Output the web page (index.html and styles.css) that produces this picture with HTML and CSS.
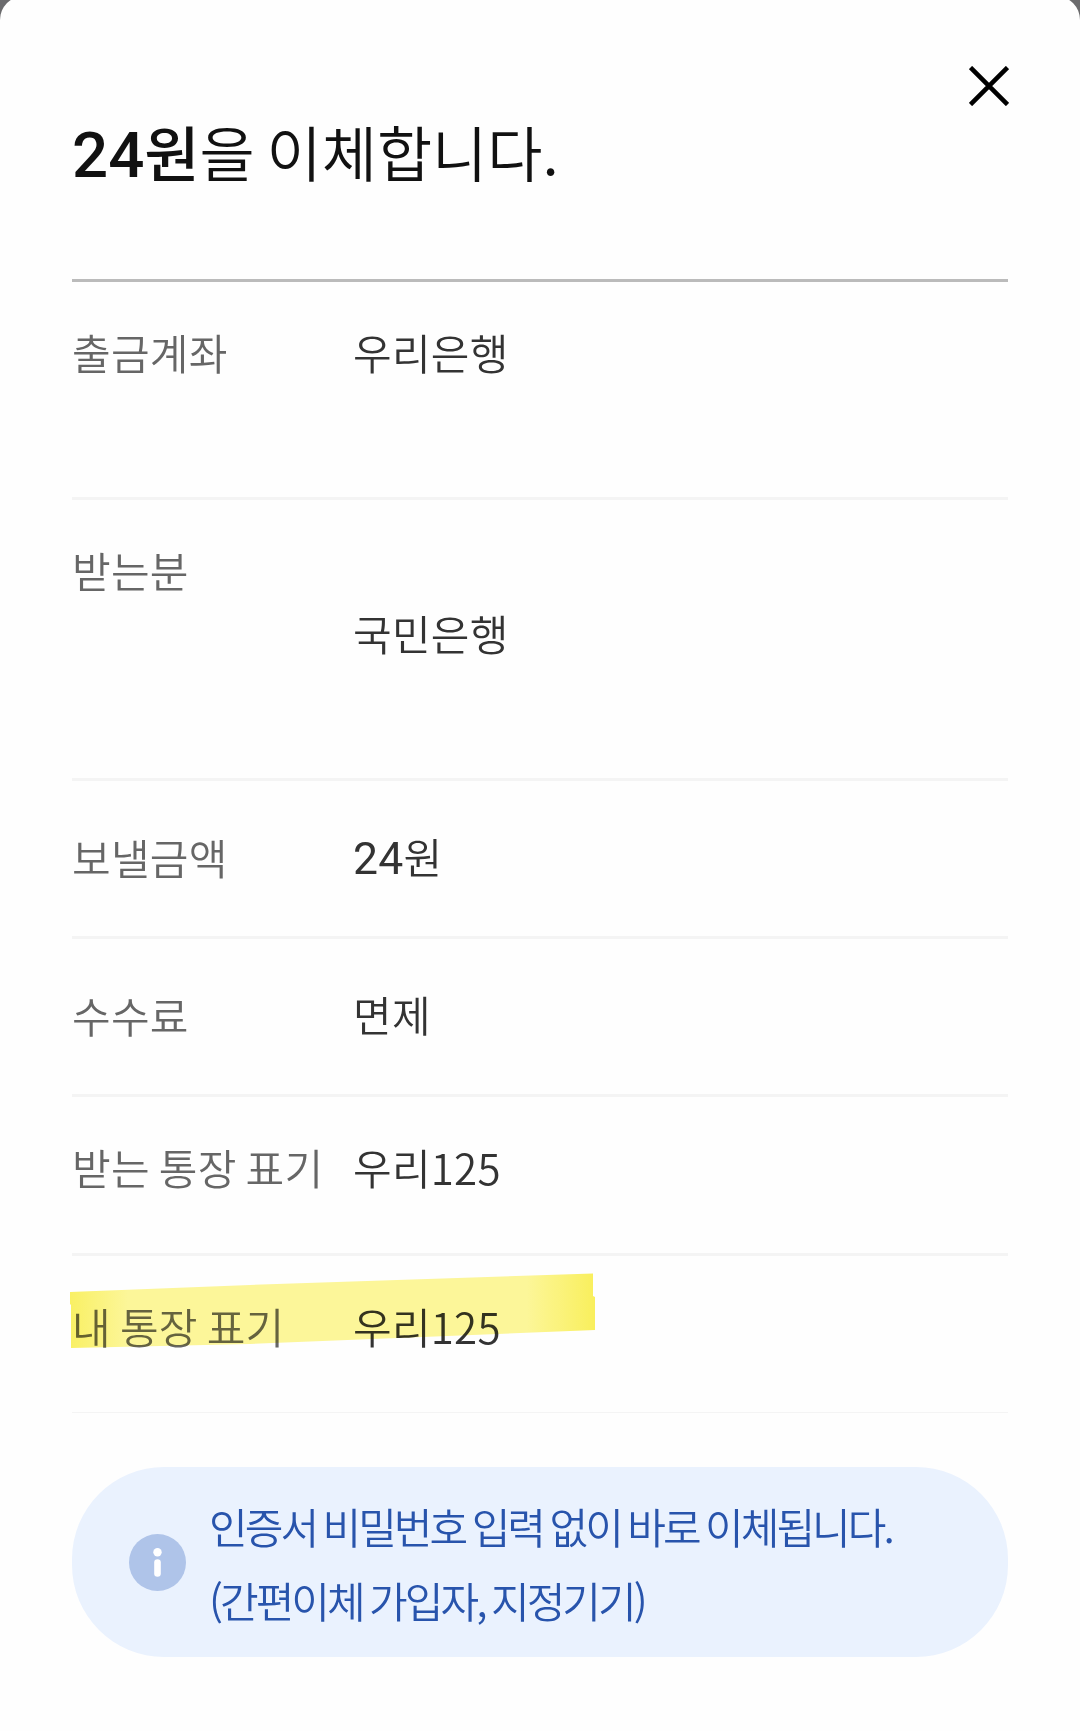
FILE: index.html
```html
<!DOCTYPE html>
<html lang="ko">
<head>
    <meta charset="UTF-8">
    <meta name="viewport" content="width=device-width, initial-scale=1.0">
    <title>이체 확인</title>
    <link rel="stylesheet" href="styles.css">
</head>
<body>
    <div class="sheet">
        <div class="sheet-top">
            <button class="close-button" aria-label="닫기">
                <svg width="40" height="40" viewBox="0 0 40 40">
                    <path d="M1.5 1.5 L38.5 38.5 M38.5 1.5 L1.5 38.5" stroke="#000" stroke-width="4.6" fill="none"/>
                </svg>
            </button>
        </div>
        <h1><strong><span class="num">24</span>원</strong>을 이체합니다.</h1>

        <dl class="detail-list">
            <div class="row row-account">
                <dt>출금계좌</dt>
                <dd>우리은행</dd>
            </div>
            <div class="row row-receiver">
                <dt>받는분</dt>
                <dd>국민은행</dd>
            </div>
            <div class="row row-amount">
                <dt>보낼금액</dt>
                <dd><span class="num">24</span>원</dd>
            </div>
            <div class="row row-fee">
                <dt>수수료</dt>
                <dd>면제</dd>
            </div>
            <div class="row">
                <dt>받는 통장 표기</dt>
                <dd>우리125</dd>
            </div>
            <div class="row row-mine">
                <dt>내 통장 표기</dt>
                <dd>우리125</dd>
                <svg class="marker" width="526" height="78" viewBox="0 0 526 78">
                    <defs>
                        <linearGradient id="ink" x1="0" x2="1" y1="0" y2="0">
                            <stop offset="0" stop-color="#faf164"/>
                            <stop offset="0.11" stop-color="#fdf79a"/>
                            <stop offset="0.87" stop-color="#fdf79a"/>
                            <stop offset="1" stop-color="#faf05c"/>
                        </linearGradient>
                    </defs>
                    <path d="M0 19 L180 12 L523 0.5 L523 23 L525 24 L525 57 L180 71 L1 75 L1 32 L0 31 Z" fill="url(#ink)"/>
                </svg>
            </div>
        </dl>

        <div class="notice">
            <svg width="57" height="57" viewBox="0 0 57 57">
                <circle cx="28.5" cy="28.5" r="28.5" fill="#afc4e9"/>
                <circle cx="28.5" cy="18.3" r="4.2" fill="#fff"/>
                <rect x="25.2" y="25.2" width="6.6" height="17.6" rx="3.3" fill="#fff"/>
            </svg>
            <p>인증서 비밀번호 입력 없이 바로 이체됩니다.<br>(간편이체 가입자, 지정기기)</p>
        </div>
    </div>
</body>
</html>
```
FILE: styles.css
```css
* {
    box-sizing: border-box;
}
body {
    margin: 0;
    background-color: #6b6b6d;
    font-family: "Noto Sans CJK KR", sans-serif;
    font-size: 42px;
    font-weight: 350;
    line-height: 63px;
    color: #333;
    overflow: hidden;
}
.sheet {
    height: 1735px;
    margin-top: -4px;
    padding: 70px 72px 0;
    background-color: #fefefe;
    border-radius: 24px 24px 0 0;
}
.sheet-top {
    display: flex;
    justify-content: flex-end;
    height: 40px;
    margin-right: -1px;
}
.close-button {
    display: block;
    width: 40px;
    height: 40px;
    padding: 0;
    border: none;
    background: none;
}
.close-button svg {
    display: block;
}
h1 {
    margin: 0;
    height: 173px;
    font-size: 60px;
    font-weight: 350;
    line-height: 90px;
    word-spacing: -5px;
    color: #111;
}
h1 strong {
    font-weight: 500;
}
/* digits run slightly larger than the hangul next to them */
.num {
    font-family: Roboto, sans-serif;
    font-size: 1.06em;
    line-height: 1;
}
.detail-list {
    margin: 0;
    border-top: 3px solid #bbb;
}
.row {
    position: relative;
    display: flex;
    height: 159px;
    padding-top: 38px;
    border-bottom: 3px solid #f4f4f4;
}
dt {
    width: 281px;
    color: #666;
    letter-spacing: 0.25px;
    word-spacing: -3px;
    white-space: nowrap;
}
dd {
    margin: 0;
    letter-spacing: 0.25px;
}
dd .num {
    font-weight: 400;
}
.row-account {
    height: 218px;
}
.row-receiver {
    height: 281px;
}
.row-receiver dd {
    padding-top: 63px;
}
.row-amount,
.row-fee {
    height: 158px;
    padding-top: 44px;
}
.row-amount dd,
.row-fee dd {
    margin-top: -1px;
}
.row-mine {
    height: 157px;
    border-bottom-width: 1px;
}
/* highlighter stroke across the row text */
.marker {
    position: absolute;
    left: -2px;
    top: 17px;
    mix-blend-mode: multiply;
}
.notice {
    display: flex;
    align-items: center;
    height: 190px;
    margin-top: 54px;
    padding-left: 57px;
    border-radius: 92px;
    background-color: #eaf2fe;
    color: #2854ac;
}
.notice p {
    margin: 1px 0 0 23px;
    line-height: 74px;
    letter-spacing: -2.95px;
    word-spacing: -2.4px;
    white-space: nowrap;
}
```
